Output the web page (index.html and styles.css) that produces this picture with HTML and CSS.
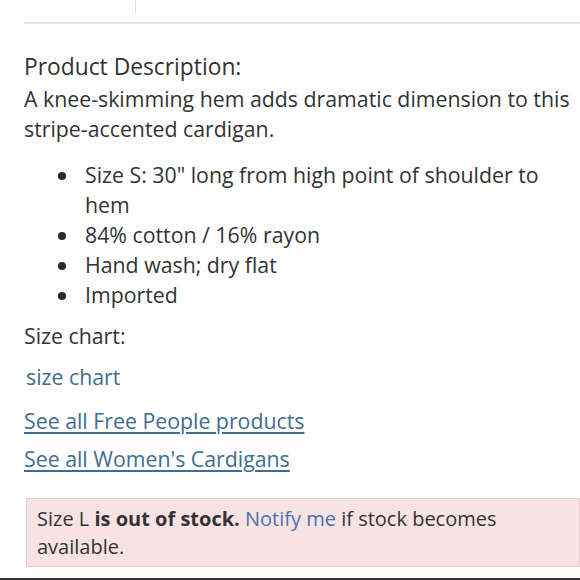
FILE: index.html
```html
<!DOCTYPE html>
<html>
<head>
<meta charset="utf-8">
<link rel="stylesheet" href="styles.css">
</head>
<body>
<div class="top">
  <div class="tab"></div>
</div>
<div class="rule"></div>
<main class="content">
  <h2 class="title">Product Description:</h2>
  <p class="desc">A knee-skimming hem adds dramatic dimension to this stripe-accented cardigan.</p>
  <ul class="bullets">
    <li><span>Size S: 30" long from high point of shoulder to hem</span></li>
    <li><span>84% cotton / 16% rayon</span></li>
    <li><span>Hand wash; dry flat</span></li>
    <li><span>Imported</span></li>
  </ul>
  <p class="label">Size chart:</p>
  <p class="chart"><a href="#" class="plain">size chart</a></p>
  <p class="more"><a href="#" class="under">See all Free People products</a></p>
  <p class="more"><a href="#" class="under">See all Women's Cardigans</a></p>
  <div class="alert">Size L <b>is out of stock.</b> <a href="#" class="notify">Notify me</a> if stock becomes available.</div>
</main>
<div class="bottom"></div>
</body>
</html>
```
FILE: styles.css
```css
html, body {
  margin: 0;
  padding: 0;
  background: #fff;
}
body {
  font-family: "Open Sans", "Noto Sans", sans-serif;
  color: #333;
  font-size: 21.3px;
  line-height: 30px;
  width: 580px;
  height: 580px;
  overflow: hidden;
  position: relative;
}
.top {
  height: 22px;
  display: flex;
}
.tab {
  width: 135px;
  height: 14px;
  border-right: 1px solid #ddd;
}
.rule {
  margin-left: 24px;
  height: 2px;
  background: #e2e2e2;
}
.content {
  padding-left: 24px;
}
.title {
  margin: 28px 0 0;
  font-size: 22.8px;
  font-weight: 400;
  line-height: 30px;
}
.desc {
  margin: 2px 0 0;
}
.bullets {
  list-style: none;
  margin: 16px 0 0;
  padding-left: 34px;
  padding-right: 20px;
}
.bullets li {
  display: grid;
  grid-template-columns: 27px 1fr;
  line-height: 30px;
}
.bullets li::before {
  content: "";
  width: 8px;
  height: 8px;
  margin-top: 12px;
  border-radius: 50%;
  background: #2a2a2a;
}
.label {
  margin: 11px 0 0;
}
.chart {
  margin: 11px 0 0 2px;
}
.plain {
  color: #3f6d8f;
  text-decoration: none;
}
.more {
  margin: 14px 0 0;
}
.more + .more {
  margin-top: 8px;
}
.under {
  color: #3f6d8f;
  text-decoration: underline;
  text-underline-offset: 3px;
}
.alert {
  margin-top: 24px;
  margin-left: 2px;
  padding: 6px 10px 5px;
  background: #f8e3e4;
  border: 1px solid #e8cfd0;
  font-size: 20px;
  line-height: 28px;
}
.notify {
  color: #4a72ad;
  text-decoration: none;
}
.bottom {
  position: absolute;
  left: 0;
  right: 0;
  bottom: 0;
  height: 2px;
  background: #333;
}
```
